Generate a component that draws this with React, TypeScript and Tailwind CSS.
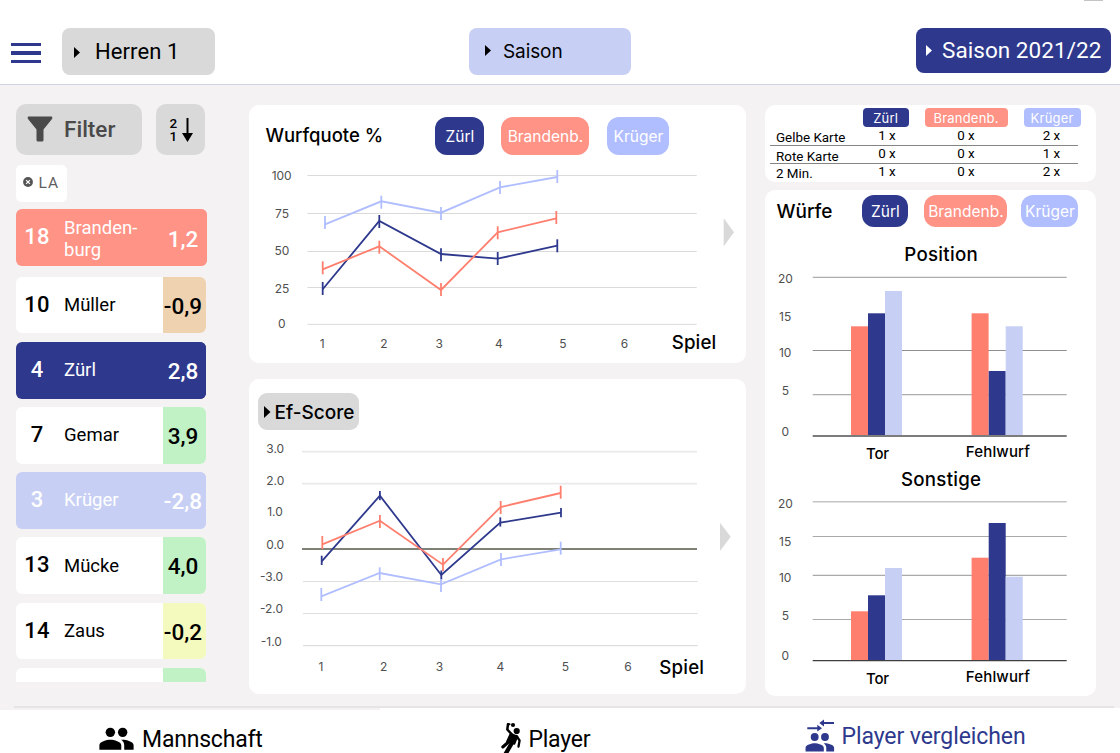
import React from "react";

type Pt = [x: number, y: number, tickTop: number];
type Label = [text: string, x: number, y: number];

const NAVY = "#2e398d";
const CORAL = "#ff7f6e";
const SKY = "#b0beff";
const PALE = "#c7cff4";

function Triangle({ className, w = 6, h = 11 }: { className?: string; w?: number; h?: number }) {
  return (
    <svg width={w} height={h} viewBox="0 0 6 11" preserveAspectRatio="none" className={`shrink-0 ${className ?? ""}`}>
      <path d="M0 0L6 5.5L0 11Z" fill="currentColor" />
    </svg>
  );
}

function Series({ pts, color, tick = 13 }: { pts: Pt[]; color: string; tick?: number }) {
  return (
    <g stroke={color} strokeWidth="1.8" fill="none">
      <polyline points={pts.map(([x, y]) => `${x},${y}`).join(" ")} />
      {pts.map(([x, , t]) => (
        <path key={x} d={`M${x} ${t}v${tick}`} />
      ))}
    </g>
  );
}

function Labels({ items, size = 12, fill = "#4f4f4f" }: { items: Label[]; size?: number; fill?: string }) {
  return (
    <g fontSize={size} fill={fill} textAnchor="middle">
      {items.map(([t, x, y], i) => (
        <text key={i} x={x} y={y}>
          {t}
        </text>
      ))}
    </g>
  );
}

function PeopleShape() {
  return (
    <g fill="currentColor" stroke="none">
      <circle cx="8" cy="8" r="3.05" />
      <circle cx="16" cy="8" r="3.05" />
      <path d="M8 12.8c-2.4 0-7.1 1.2-7.1 3.6v2.9h14.2v-2.9c0-2.4-4.7-3.6-7.1-3.6z" />
      <path d="M16 12.8c-.3 0-.65.02-1 .06 1.2.85 2 2 2 3.5v2.94h6.1v-2.9c0-2.4-4.7-3.6-7.1-3.6z" />
    </g>
  );
}

type Player = { no: string; name: React.ReactNode; value: string; row: string; cell: string };

const players: Player[] = [
  { no: "18", name: <>Branden-<br />burg</>, value: "1,2", row: "bg-[#ff9386] text-white", cell: "bg-[#ff9386]" },
  { no: "10", name: "Müller", value: "-0,9", row: "bg-white text-black", cell: "bg-[#efd2b0]" },
  { no: "4", name: "Zürl", value: "2,8", row: "bg-[#2e398d] text-white", cell: "bg-[#2e398d]" },
  { no: "7", name: "Gemar", value: "3,9", row: "bg-white text-black", cell: "bg-[#c0f2c6]" },
  { no: "3", name: "Krüger", value: "-2,8", row: "bg-[#c7cff4] text-white", cell: "bg-[#c7cff4]" },
  { no: "13", name: "Mücke", value: "4,0", row: "bg-white text-black", cell: "bg-[#c0f2c6]" },
  { no: "14", name: "Zaus", value: "-0,2", row: "bg-white text-black", cell: "bg-[#f4fabd]" },
];

function Header() {
  return (
    <header className="flex h-[85px] shrink-0 items-start border-b border-[#d0d2e4] bg-white pl-[11px] pr-[9px]">
      <div className="mt-[43px] flex w-[30px] flex-col gap-[5px]">
        <span className="h-[3.3px] bg-[#2e398d]" />
        <span className="h-[3.3px] bg-[#2e398d]" />
        <span className="h-[3.3px] bg-[#2e398d]" />
      </div>
      <button className="ml-[21px] mt-7 flex h-[47px] w-[153px] items-center rounded-lg bg-[#d9d9d9] pl-3">
        <Triangle className="mt-[2px]" />
        <span className="ml-[15px] text-[22px] leading-[47px] tracking-[0.1px]">Herren 1</span>
      </button>
      <button className="ml-[254px] mt-7 flex h-[47px] w-[162px] items-center rounded-lg bg-[#c7cff4] pl-4">
        <Triangle className="-mt-[2px]" />
        <span className="ml-3 font-[Inter] text-[19px] leading-[47px] tracking-[-0.1px]">Saison</span>
      </button>
      <button className="ml-auto mt-7 flex h-[45px] w-[195px] items-center rounded-lg bg-[#2e398d] pl-[10px] text-white">
        <Triangle />
        <span className="ml-[10px] whitespace-nowrap text-[22.5px] leading-[45px] tracking-[0.05px]">Saison 2021/22</span>
      </button>
    </header>
  );
}

function Sidebar() {
  return (
    <aside className="flex w-[191px] shrink-0 flex-col">
      <div className="mt-[19px] flex gap-[14px]">
        <button className="flex h-[51px] w-[126px] items-center rounded-[10px] bg-[#d9d9d9] pl-[11px] text-[#4a4a4a]">
          <svg width="26" height="26" viewBox="0 0 26 26" className="-mt-[2px] shrink-0">
            <path d="M1.2 0.6H24.8Q26 1.8 25 3L16.5 13.5V24Q16.5 25.5 15 25.5H11Q9.5 25.5 9.5 24V13.5L1 3Q0 1.8 1.2 0.6Z" fill="currentColor" />
          </svg>
          <span className="ml-[11px] text-[22.5px] font-medium leading-[51px]">Filter</span>
        </button>
        <button className="flex h-[51px] w-[48.5px] shrink-0 items-center rounded-[10px] bg-[#d9d9d9] pl-[13.4px]">
          <span className="flex flex-col text-[13.5px] font-medium leading-[12.5px]">
            <span>2</span>
            <span>1</span>
          </span>
          <svg width="11" height="24" viewBox="0 0 11 24" className="ml-[5px] shrink-0">
            <path d="M5.5 0V18" stroke="black" strokeWidth="2" />
            <path d="M0 15H11L5.5 24Z" fill="black" />
          </svg>
        </button>
      </div>
      <div className="mt-[10px] flex h-[37px] w-[51px] items-center rounded-[5px] bg-white pl-[6.5px] text-[#5f5f5f]">
        <svg width="10" height="10" viewBox="0 0 10 10" className="-mt-[3px]">
          <circle cx="5" cy="5" r="4.9" fill="#555" />
          <path d="M3.1 3.1L6.9 6.9M6.9 3.1L3.1 6.9" stroke="white" strokeWidth="1.2" />
        </svg>
        <span className="ml-[6px] mt-px text-[15.5px] tracking-[1px]">LA</span>
      </div>
      <ul className="mt-[7px] flex h-[473px] flex-col overflow-hidden">
        {players.map((p, i) => (
          <li
            key={p.no}
            className={`flex shrink-0 items-stretch overflow-hidden rounded-[6px] ${i === 0 ? "mb-[10.7px] h-[57px] w-[191px] pl-px" : "mb-[8.5px] h-[56.7px] w-[190px]"} ${p.row}`}
          >
            <span className={`text-center text-[22px] font-medium leading-[56px] tracking-[0.2px] ${i === 0 ? "w-[40px]" : "w-[42px]"}`}>{p.no}</span>
            <span className="flex w-[105px] items-center pl-[6px] text-[18.5px] leading-[22.5px]">
              <span className={i === 0 ? "pl-px pt-[3px]" : ""}>{p.name}</span>
            </span>
            <span className={`whitespace-nowrap text-center text-[22.5px] font-medium leading-[58px] ${i === 0 ? "w-[45px] pt-px" : "w-[43px]"} ${p.cell}`}>
              <span className="-mx-2 pr-[3px]">{p.value}</span>
            </span>
          </li>
        ))}
        <li className="flex h-[57px] w-[190px] shrink-0 overflow-hidden rounded-[6px] bg-white">
          <span className="ml-auto w-[43px] bg-[#c0f2c6]" />
        </li>
      </ul>
    </aside>
  );
}

function QuoteCard() {
  return (
    <section className="flex h-[258px] flex-col rounded-[10px] bg-white">
      <div className="flex h-[50px] items-start pl-[16.4px] font-[Inter] text-white">
        <h2 className="w-[170px] pt-[18.5px] text-[18.5px] font-medium leading-[22px] text-black">Wurfquote %</h2>
        <span className="mt-[11.5px] h-[38px] w-[49px] rounded-[12px] bg-[#2e398d] text-center text-[15.5px] leading-[39px]">Zürl</span>
        <span className="ml-[17px] mt-[11.5px] h-[38px] w-[88px] rounded-[12px] bg-[#ff9386] text-center text-[15.5px] leading-[39px]">Brandenb.</span>
        <span className="ml-[18px] mt-[11.5px] h-[38px] w-[62px] rounded-[12px] bg-[#b0beff] text-center text-[15.5px] leading-[39px]">Krüger</span>
      </div>
      <svg width="497" height="208" viewBox="249 155 497 208" className="font-[Inter]">
        <path d="M307.3 175.5H696.7M307.3 213.5H696.7M307.3 251.5H696.7M307.3 287.5H696.7M307.3 324.3H696.7" stroke="#dadada" strokeWidth="1" />
        <Labels items={[["100", 281.7, 180], ["75", 282, 218.3], ["50", 282, 255.3], ["25", 282, 293], ["0", 281.8, 327.5]]} />
        <Labels items={[["1", 322.3, 348.3], ["2", 384, 348.3], ["3", 439.3, 348.3], ["4", 499, 348.3], ["5", 563, 348.3], ["6", 624.5, 348.3]]} />
        <Series color={SKY} pts={[[325, 224.3, 216], [381.3, 201.3, 195.7], [441, 212.7, 207], [500, 187.3, 181], [557.3, 177, 170]]} />
        <Series color={NAVY} pts={[[322.7, 289.3, 282], [379.3, 221, 215], [441, 254, 248.3], [497.7, 258.7, 252], [557.3, 245.7, 239.3]]} />
        <Series color={CORAL} pts={[[322.7, 269.3, 261.3], [379.3, 246.3, 240.7], [441, 290, 283], [497.7, 232.3, 226.3], [556.3, 218.3, 211]]} />
        <text x="671.7" y="349.3" fontSize="18.7" fontWeight="500" textLength="44.5">Spiel</text>
        <path d="M723.7 218.3L734 232.3L723.7 246.3Z" fill="#d9d9d9" />
      </svg>
    </section>
  );
}

function ScoreCard() {
  return (
    <section className="mt-4 flex h-[315px] flex-col rounded-[10px] bg-white">
      <button className="ml-[9px] mt-[14px] flex h-[37px] w-[101px] shrink-0 items-center rounded-[9px] bg-[#d9d9d9] pl-[6px]">
        <Triangle w={6.5} h={12} />
        <span className="ml-[4px] pt-px font-[Inter] text-[19px] font-medium leading-[37px]">Ef-Score</span>
      </button>
      <svg width="497" height="264" viewBox="249 430 497 264" className="font-[Inter]">
        <path d="M302 451.7H697M302 483.7H697" stroke="#e9e9e9" strokeWidth="1.8" />
        <path d="M303 581.5H697.7M303 613.5H697.7M303 645.6H697.7" stroke="#dedede" strokeWidth="1.1" />
        <path d="M302 549H697" stroke="#7f8076" strokeWidth="1.9" />
        <Labels
          items={[["3.0", 275.2, 452.7], ["2.0", 275.2, 484.7], ["1.0", 275, 516.3], ["0.0", 275.2, 549.3], ["-3.0", 271.5, 581.3], ["-2.0", 271.5, 613.3], ["-1.0", 271.3, 646.3]]}
        />
        <Labels items={[["1", 321, 671], ["2", 383.7, 671], ["3", 439.5, 671], ["4", 500.3, 671], ["5", 565.3, 671], ["6", 628, 671]]} />
        <Series color={NAVY} tick={9.3} pts={[[321.7, 561.3, 555.7], [379.9, 495.7, 491], [441.3, 575, 570.5], [500.3, 522.7, 517.3], [561, 512.7, 508]]} />
        <Series color={CORAL} pts={[[322.3, 544.3, 536], [379.9, 520.7, 515], [443, 564.7, 558], [500.7, 507, 501], [560.7, 493, 485.7]]} />
        <Series color={SKY} pts={[[321.3, 596.3, 588], [379.7, 573, 567.3], [441, 584.3, 579], [501, 559.3, 553], [560.7, 549.3, 541.7]]} />
        <text x="659.3" y="673.5" fontSize="18.7" fontWeight="500" textLength="44.7">Spiel</text>
        <path d="M720 522.7L730.7 536.8L720 551Z" fill="#d9d9d9" />
      </svg>
    </section>
  );
}

const cards = [
  ["Gelbe Karte", "1 x", "0 x", "2 x"],
  ["Rote Karte", "0 x", "0 x", "1 x"],
  ["2 Min.", "1 x", "0 x", "2 x"],
];

function PenaltyCard() {
  return (
    <section className="h-[77px] rounded-[10px] bg-white pt-[3px]">
      <div className="flex h-[20px] pb-px pl-[97.6px] font-[Inter] text-[13px] leading-[20px] tracking-[0.2px] text-white">
        <span className="w-[46px] rounded-[4px] bg-[#2e398d] text-center">Zürl</span>
        <span className="ml-4 w-[83px] rounded-[4px] bg-[#ff9386] text-center">Brandenb.</span>
        <span className="ml-4 w-[57px] rounded-[4px] bg-[#b0beff] text-center">Krüger</span>
      </div>
      {cards.map(([label, a, b, c], i) => (
        <div
          key={label}
          className={`ml-[5px] flex h-[18px] w-[308px] pl-[6px] text-[13.4px] leading-[15px] ${i < 2 ? "border-b border-[#858585]" : ""}`}
        >
          <span className={`w-[80px] shrink-0 ${i === 1 ? "pt-[3px]" : "pt-[2px]"}`}>{label}</span>
          <span className="w-[62px] shrink-0 text-center">{a}</span>
          <span className="w-[96px] shrink-0 text-center">{b}</span>
          <span className="w-[75px] shrink-0 text-center">{c}</span>
        </div>
      ))}
    </section>
  );
}

function Bars({ tops, base }: { tops: number[]; base: number }) {
  const xs = [851, 868, 885, 971.6, 988.7, 1005.7];
  const fills = [CORAL, NAVY, PALE];
  return (
    <g>
      {xs.map((x, i) => (
        <rect key={x} x={x} y={tops[i]} width="17" height={base - tops[i]} fill={fills[i % 3]} />
      ))}
    </g>
  );
}

function ThrowsCard() {
  return (
    <section className="mt-2 flex h-[506px] flex-col rounded-[10px] bg-white">
      <div className="flex h-[40px] items-start pl-[11.4px] pt-[5px] font-[Inter] text-[15.5px] leading-[33px] text-white">
        <h2 className="w-[86px] text-[19px] font-medium text-black">Würfe</h2>
        <span className="h-[32px] w-[46px] rounded-[12px] bg-[#2e398d] text-center">Zürl</span>
        <span className="ml-4 h-[32px] w-[83px] rounded-[12px] bg-[#ff9386] text-center">Brandenb.</span>
        <span className="ml-[14px] h-[32px] w-[57px] rounded-[12px] bg-[#b0beff] text-center">Krüger</span>
      </div>
      <svg width="331" height="466" viewBox="765 230 331 466" className="font-[Inter]">
        <g fontSize="18.7" fontWeight="500">
          <text x="904.3" y="260.7" textLength="73.5">Position</text>
          <text x="901" y="485.5" textLength="80">Sonstige</text>
        </g>
        <path d="M812.7 277.4H1066.7M812.7 394.7H1066.7" stroke="#adadad" strokeWidth="1.3" />
        <path d="M812.7 350.5H1066.7" stroke="#8f8f8f" strokeWidth="1" />
        <Bars tops={[326.3, 313.3, 291, 313.3, 371, 326.3]} base={435.5} />
        <path d="M812.7 436H1066.7" stroke="#7c7c7c" strokeWidth="1.8" />
        <Labels items={[["20", 785.5, 283.3], ["15", 785.2, 321], ["10", 785.2, 356.7], ["5", 785.4, 395.3], ["0", 785.4, 435.7]]} />
        <path d="M812.7 501.8H1066.7" stroke="#c4c4c4" strokeWidth="1.5" />
        <path d="M812.7 536.5H1066.7M812.7 575.4H1066.7M812.7 619.5H1066.7" stroke="#a9a9a9" strokeWidth="1.1" />
        <Bars tops={[611.3, 595.3, 568, 557.7, 523, 576.7]} base={660.3} />
        <path d="M812.7 660.6H1066.7" stroke="#3f3f3f" strokeWidth="1.4" />
        <Labels items={[["20", 785.5, 508], ["15", 785.2, 545.7], ["10", 785.2, 581.5], ["5", 785.4, 620], ["0", 785.4, 660.3]]} />
        <g fontSize="15" fontWeight="500">
          <text x="866" y="458.7" textLength="23">Tor</text>
          <text x="965.8" y="457" textLength="64.2">Fehlwurf</text>
          <text x="866" y="683.5" textLength="23">Tor</text>
          <text x="965.8" y="682" textLength="64.2">Fehlwurf</text>
        </g>
      </svg>
    </section>
  );
}

function BottomNav() {
  return (
    <footer className="flex h-[47px] shrink-0 flex-col overflow-hidden">
      <div className="ml-[14px] mr-[6px] h-[2px] shrink-0 bg-[#e6e5e6]" />
      <nav className="flex h-[45px] items-start whitespace-nowrap bg-white text-[23px] leading-[27px]">
        <a className="flex w-[380px] items-start border-t-2 border-[#f4f2f3] pl-[97.5px]">
          <svg width="37" height="37" viewBox="0 0 24 24" className="mt-[10px] shrink-0">
            <PeopleShape />
          </svg>
          <span className="ml-[7.5px] mt-[16px] tracking-[-0.2px]">Mannschaft</span>
        </a>
        <a className="flex w-[424px] items-start pl-[120px]">
          <svg width="24" height="32" viewBox="500 721 24 32" className="mt-[13px] shrink-0" fill="none" stroke="black" strokeLinecap="round" strokeLinejoin="round">
            <circle cx="513" cy="725" r="2.1" fill="black" stroke="none" />
            <circle cx="516.7" cy="731" r="3.1" fill="black" stroke="none" />
            <path d="M508 724.2L507.3 729.5L511.5 734" strokeWidth="2.5" />
            <path d="M508 724.2H509.5" strokeWidth="2" />
            <path d="M510.5 733.5L517.5 736.5L514.5 744L506.8 741.5Z" fill="black" strokeWidth="1.5" />
            <path d="M516.5 736L519.6 740.5L518.5 746.5" strokeWidth="2.3" />
            <path d="M508.5 742L502.8 747" strokeWidth="3" />
            <path d="M512.5 742L505.5 754" strokeWidth="4.2" />
          </svg>
          <span className="ml-[4.5px] mt-[18px] tracking-[-0.25px]">Player</span>
        </a>
        <a className="flex items-start text-[#2e398d]">
          <svg width="32" height="34" viewBox="804 719 32 34" className="mt-[11px] shrink-0" fill="none" stroke="currentColor" strokeWidth="1.9">
            <path d="M823 723H834M807.3 728.2H818.5" />
            <path d="M819.3 723L824 719.6V726.4ZM822 728.2L817.3 724.8V731.6Z" fill="currentColor" stroke="none" />
            <g transform="translate(804.4 726.7) scale(1.286)">
              <PeopleShape />
            </g>
          </svg>
          <span className="ml-[5.5px] mt-[15px] tracking-[-0.08px]">Player vergleichen</span>
        </a>
      </nav>
    </footer>
  );
}

export default function App() {
  return (
    <div className="relative flex h-[753px] w-[1120px] flex-col overflow-hidden bg-[#f4f2f3] font-[Roboto] text-black">
      <span className="absolute left-[1084px] top-0 h-px w-[19px] bg-[#c4c4c4]" />
      <Header />
      <main className="flex h-[621px] shrink-0 pl-4">
        <Sidebar />
        <div className="ml-[42px] w-[497px] shrink-0 pt-5">
          <QuoteCard />
          <ScoreCard />
        </div>
        <div className="ml-[19px] w-[331px] shrink-0 pt-5">
          <PenaltyCard />
          <ThrowsCard />
        </div>
      </main>
      <BottomNav />
    </div>
  );
}
